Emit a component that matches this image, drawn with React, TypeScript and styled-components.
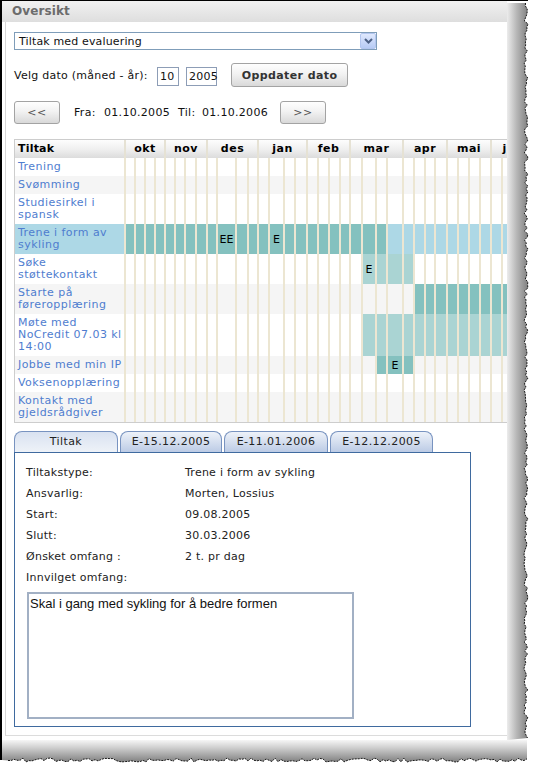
import React from "react";
import styled, { createGlobalStyle } from "styled-components";

// week column widths in the chart, left to right
const WEEKS = [
  10, 10, 10, 10, 10, 10, 11, 11, 10, 19, 12, 10, 11, 15, 11, 12, 11, 11, 11, 10,
  12, 14, 11, 16, 11, 11, 10, 12, 11, 11, 11, 11, 11, 11, 11, 11,
];
const LABEL_W = 109;
const TEMPLATE = `${LABEL_W}px ${WEEKS.map((w) => `${w}px`).join(" ")}`;

const MONTHS: [string, number][] = [
  ["okt", 4],
  ["nov", 4],
  ["des", 4],
  ["jan", 4],
  ["feb", 4],
  ["mar", 4],
  ["apr", 4],
  ["mai", 4],
  ["jun", 4],
];

type Tone = "dark" | "light";

interface Bar {
  from: number;
  to: number;
  tone: Tone;
}

interface TiltakRow {
  lines: string[];
  bar?: Bar;
  marks?: Record<number, string>;
  selected?: boolean;
}

const rows: TiltakRow[] = [
  { lines: ["Trening"] },
  { lines: ["Svømming"] },
  { lines: ["Studiesirkel i", "spansk"] },
  {
    lines: ["Trene i form av", "sykling"],
    bar: { from: 0, to: 22, tone: "dark" },
    marks: { 9: "EE", 13: "E" },
    selected: true,
  },
  {
    lines: ["Søke", "støttekontakt"],
    bar: { from: 21, to: 24, tone: "light" },
    marks: { 21: "E" },
  },
  { lines: ["Starte på", "føreropplæring"], bar: { from: 25, to: 99, tone: "dark" } },
  {
    lines: ["Møte med", "NoCredit 07.03 kl", "14:00"],
    bar: { from: 21, to: 99, tone: "light" },
  },
  {
    lines: ["Jobbe med min IP"],
    bar: { from: 22, to: 24, tone: "dark" },
    marks: { 23: "E" },
  },
  { lines: ["Voksenopplæring"] },
  { lines: ["Kontakt med", "gjeldsrådgiver"] },
];

const details: [string, string][] = [
  ["Tiltakstype:", "Trene i form av sykling"],
  ["Ansvarlig:", "Morten, Lossius"],
  ["Start:", "09.08.2005"],
  ["Slutt:", "30.03.2006"],
  ["Ønsket omfang :", "2 t. pr dag"],
  ["Innvilget omfang:", ""],
];

const tabs = [
  { label: "Tiltak", width: 104, active: true },
  { label: "E-15.12.2005", width: 102 },
  { label: "E-11.01.2006", width: 104 },
  { label: "E-12.12.2005", width: 103 },
];

const noise = (i: number) => {
  const s = Math.sin(i * 12.9898 + 4.1) * 43758.5453;
  return s - Math.floor(s);
};

export default function App() {
  const rightEdge: string[] = [];
  for (let y = 3, i = 0; y <= 740; y += 3, i++) {
    rightEdge.push(`${(19 + (noise(i) - 0.5) * 4).toFixed(1)},${y}`);
  }
  const bottomEdge: string[] = [];
  for (let x = 8, i = 0; x <= 527; x += 3, i++) {
    bottomEdge.push(`${x},${(20 + (noise(i + 300) - 0.5) * 4).toFixed(1)}`);
  }

  return (
    <>
      <GlobalStyle />
      <Frame>
        <Sheet>
          <TitleBar>Oversikt</TitleBar>
          <Body>
            <SelectBox>
              <span>Tiltak med evaluering</span>
              <SelectArrow>
                <svg width="9" height="6" viewBox="0 0 9 6">
                  <path d="M1 1 L4.5 4.5 L8 1" fill="none" stroke="#4d6185" strokeWidth="2" />
                </svg>
              </SelectArrow>
            </SelectBox>

            <DateRow>
              <DateLabel>Velg dato (måned - år):</DateLabel>
              <SmallInput $w={22}>10</SmallInput>
              <SmallInput $w={31} style={{ marginLeft: 7 }}>
                2005
              </SmallInput>
              <Button $w={117} $bold>
                Oppdater dato
              </Button>
            </DateRow>

            <NavRow>
              <Button $w={46}>&lt;&lt;</Button>
              <Period>
                <span>Fra:</span>
                <span>01.10.2005</span>
                <span>Til:</span>
                <span>01.10.2006</span>
              </Period>
              <Button $w={46}>&gt;&gt;</Button>
            </NavRow>

            <Chart>
              <HeadRow>
                <HeadLabel>Tiltak</HeadLabel>
                {MONTHS.map(([m, span]) => (
                  <MonthHead key={m} $span={span}>
                    {m}
                  </MonthHead>
                ))}
              </HeadRow>
              {rows.map((row, r) => (
                <ChartRow key={r} $bg={row.selected ? "#add8e6" : r % 2 ? "#f5f5f5" : "#fff"}>
                  <RowLabel>
                    {row.lines.map((l) => (
                      <div key={l}>{l}</div>
                    ))}
                  </RowLabel>
                  {WEEKS.map((_, c) => {
                    const tone =
                      row.bar && c >= row.bar.from && c <= row.bar.to ? row.bar.tone : undefined;
                    return (
                      <WeekCell key={c} $tone={tone}>
                        {row.marks?.[c]}
                      </WeekCell>
                    );
                  })}
                </ChartRow>
              ))}
            </Chart>

            <TabStrip>
              {tabs.map((t) => (
                <Tab key={t.label} $w={t.width} $active={!!t.active}>
                  {t.label}
                </Tab>
              ))}
            </TabStrip>
            <DetailBox>
              <DetailGrid>
                {details.map(([k, v]) => (
                  <React.Fragment key={k}>
                    <span>{k}</span>
                    <span>{v}</span>
                  </React.Fragment>
                ))}
              </DetailGrid>
              <Note readOnly defaultValue="Skal i gang med sykling for å bedre formen" />
            </DetailBox>
          </Body>
        </Sheet>

        <RightShade>
          <svg width="30" height="740" viewBox="0 0 30 740">
            <defs>
              <linearGradient id="rs" x1="0" y1="0" x2="1" y2="0">
                <stop offset="0" stopColor="#ececec" />
                <stop offset="0.45" stopColor="#b8b8b8" />
                <stop offset="1" stopColor="#808080" />
              </linearGradient>
            </defs>
            <line x1="0" y1="0.5" x2="21" y2="0.5" stroke="#000" />
            <polygon points={`0,3 ${rightEdge.join(" ")} 0,740`} fill="url(#rs)" />
            <polyline points={rightEdge.join(" ")} fill="none" stroke="#1a1a1a" strokeWidth="1" strokeDasharray="2 1" />
          </svg>
        </RightShade>

        <BottomShade>
          <svg width="537" height="32" viewBox="0 0 537 32">
            <defs>
              <linearGradient id="bs" x1="0" y1="0" x2="0" y2="1">
                <stop offset="0" stopColor="#f6f6f6" />
                <stop offset="0.35" stopColor="#cfcfcf" />
                <stop offset="1" stopColor="#808080" />
              </linearGradient>
            </defs>
            <rect x="0" y="0" width="2" height="20" fill="#000" />
            <polygon points={`2,0 527,0 ${bottomEdge.slice().reverse().join(" ")} 2,20`} fill="url(#bs)" />
            <polyline points={bottomEdge.join(" ")} fill="none" stroke="#1a1a1a" strokeWidth="1" strokeDasharray="2 1" />
          </svg>
        </BottomShade>
      </Frame>
    </>
  );
}

const GlobalStyle = createGlobalStyle`
  html, body {
    margin: 0;
    padding: 0;
    background: #fff;
  }
  body {
    font-family: "DejaVu Sans", Verdana, sans-serif;
    font-size: 11px;
    letter-spacing: 0.25px;
    color: #111;
  }
`;

const Frame = styled.div`
  display: grid;
  grid-template-columns: 507px 30px;
  grid-template-rows: 740px 32px;
  width: 537px;
`;

const Sheet = styled.div`
  box-sizing: border-box;
  border-left: 2px solid #000;
  border-top: 1px solid #000;
  background: #fff;
  overflow: hidden;
`;

const RightShade = styled.div`
  line-height: 0;
`;

const BottomShade = styled.div`
  grid-column: 1 / 3;
  line-height: 0;
`;

const TitleBar = styled.div`
  height: 21px;
  line-height: 21px;
  padding-left: 10px;
  background: linear-gradient(#f1f1f1, #dedede);
  font-weight: bold;
  font-size: 12px;
  letter-spacing: 0.1px;
  color: #6c6c6c;
`;

const Body = styled.div`
  margin-left: 3px;
  border-left: 1px solid #d6d6d6;
  border-bottom: 1px solid #dcdcdc;
  padding: 10px 0 8px 8px;
  display: flex;
  flex-direction: column;
`;

const SelectBox = styled.div`
  box-sizing: border-box;
  width: 363px;
  height: 18px;
  border: 1px solid #7f9db9;
  display: flex;
  align-items: center;
  justify-content: space-between;
  padding-left: 4px;
  font-size: 11px;
  letter-spacing: 0.15px;
`;

const SelectArrow = styled.div`
  box-sizing: border-box;
  width: 16px;
  height: 16px;
  border: 1px solid #b3c6ef;
  border-radius: 2px;
  background: linear-gradient(#dfe8fd, #b7cbf5);
  display: flex;
  align-items: center;
  justify-content: center;
`;

const DateRow = styled.div`
  margin-top: 13px;
  height: 24px;
  display: flex;
  align-items: center;
`;

const DateLabel = styled.span`
  width: 143px;
`;

const SmallInput = styled.div<{ $w: number }>`
  box-sizing: border-box;
  width: ${(p) => p.$w}px;
  height: 19px;
  margin-top: 2px;
  border: 1px solid #8d9db6;
  padding-left: 2px;
  line-height: 17px;
`;

const Button = styled.div<{ $w: number; $bold?: boolean }>`
  box-sizing: border-box;
  width: ${(p) => p.$w}px;
  height: 100%;
  margin-left: 14px;
  border: 1px solid #a3a3a3;
  border-radius: 3px;
  background: linear-gradient(#fefefe, #f2f2f2 45%, #d9d9d9);
  display: flex;
  align-items: center;
  justify-content: center;
  font-weight: ${(p) => (p.$bold ? "bold" : "normal")};
  letter-spacing: ${(p) => (p.$bold ? "0.4px" : "0.5px")};
  color: ${(p) => (p.$bold ? "#333" : "#555")};

  &:first-child {
    margin-left: 0;
  }
`;

const NavRow = styled.div`
  margin-top: 14px;
  height: 23px;
  display: flex;
  align-items: center;
`;

const Period = styled.div`
  display: grid;
  grid-template-columns: 30px 74px 24px 62px;
  margin-left: 14px;
  letter-spacing: 0.3px;

  & + ${Button} {
    margin-left: 16px;
  }
`;

const Chart = styled.div`
  margin-top: 15px;
  border-top: 1px solid #cdcdcd;
  border-bottom: 1px solid #cdcdcd;
  border-left: 1px solid #cdcdcd;
  overflow: hidden;
`;

const HeadRow = styled.div`
  display: grid;
  grid-template-columns: ${TEMPLATE};
  width: max-content;
  height: 18px;
  background: linear-gradient(#fdfdfd, #f0f0f0 50%, #dcdcdc);
  font-weight: bold;
  line-height: 18px;
  color: #000;
`;

const HeadLabel = styled.div`
  padding-left: 3px;
  letter-spacing: 0.2px;
`;

const MonthHead = styled.div<{ $span: number }>`
  grid-column: span ${(p) => p.$span};
  box-sizing: border-box;
  border-left: 2px solid #e6e2d4;
  text-align: center;
  letter-spacing: 0.5px;
`;

const ChartRow = styled.div<{ $bg: string }>`
  display: grid;
  grid-template-columns: ${TEMPLATE};
  width: max-content;
  background: ${(p) => p.$bg};
`;

const RowLabel = styled.div`
  padding: 3px 2px 3px 3px;
  line-height: 12px;
  color: #4f7dcf;
  letter-spacing: 0.45px;
  white-space: nowrap;
`;

const WeekCell = styled.div<{ $tone?: Tone }>`
  box-sizing: border-box;
  border-left: 2px solid #ece6d2;
  background: ${(p) =>
    p.$tone === "dark" ? "#84c1bf" : p.$tone === "light" ? "#aad4d3" : "transparent"};
  display: flex;
  align-items: center;
  justify-content: center;
  color: #000;
  letter-spacing: 0;
`;

const TabStrip = styled.div`
  margin-top: 8px;
  height: 21px;
  display: flex;
  gap: 2px;
`;

const Tab = styled.div<{ $w: number; $active: boolean }>`
  box-sizing: border-box;
  width: ${(p) => p.$w}px;
  height: 21px;
  border: 1px solid #7893c0;
  border-bottom: none;
  border-radius: 8px 8px 0 0;
  background: ${(p) =>
    p.$active ? "linear-gradient(#d9e2f1, #eef2f8)" : "linear-gradient(#eef2f9, #bccbe5)"};
  text-align: center;
  line-height: 20px;
  color: #222;
  letter-spacing: 0.4px;
`;

const DetailBox = styled.div`
  box-sizing: border-box;
  width: 457px;
  height: 275px;
  border: 1px solid #3f6a9f;
  padding: 9px 0 0 11px;
`;

const DetailGrid = styled.div`
  display: grid;
  grid-template-columns: 159px 1fr;
  line-height: 21px;
  color: #222;
`;

const Note = styled.textarea`
  display: block;
  box-sizing: border-box;
  width: 327px;
  height: 127px;
  margin: 4px 0 0 1px;
  border: 2px solid #a2b0c4;
  padding: 2px 1px;
  resize: none;
  outline: none;
  font-family: "Liberation Sans", Arial, sans-serif;
  font-size: 13px;
  letter-spacing: 0;
  color: #111;
`;
